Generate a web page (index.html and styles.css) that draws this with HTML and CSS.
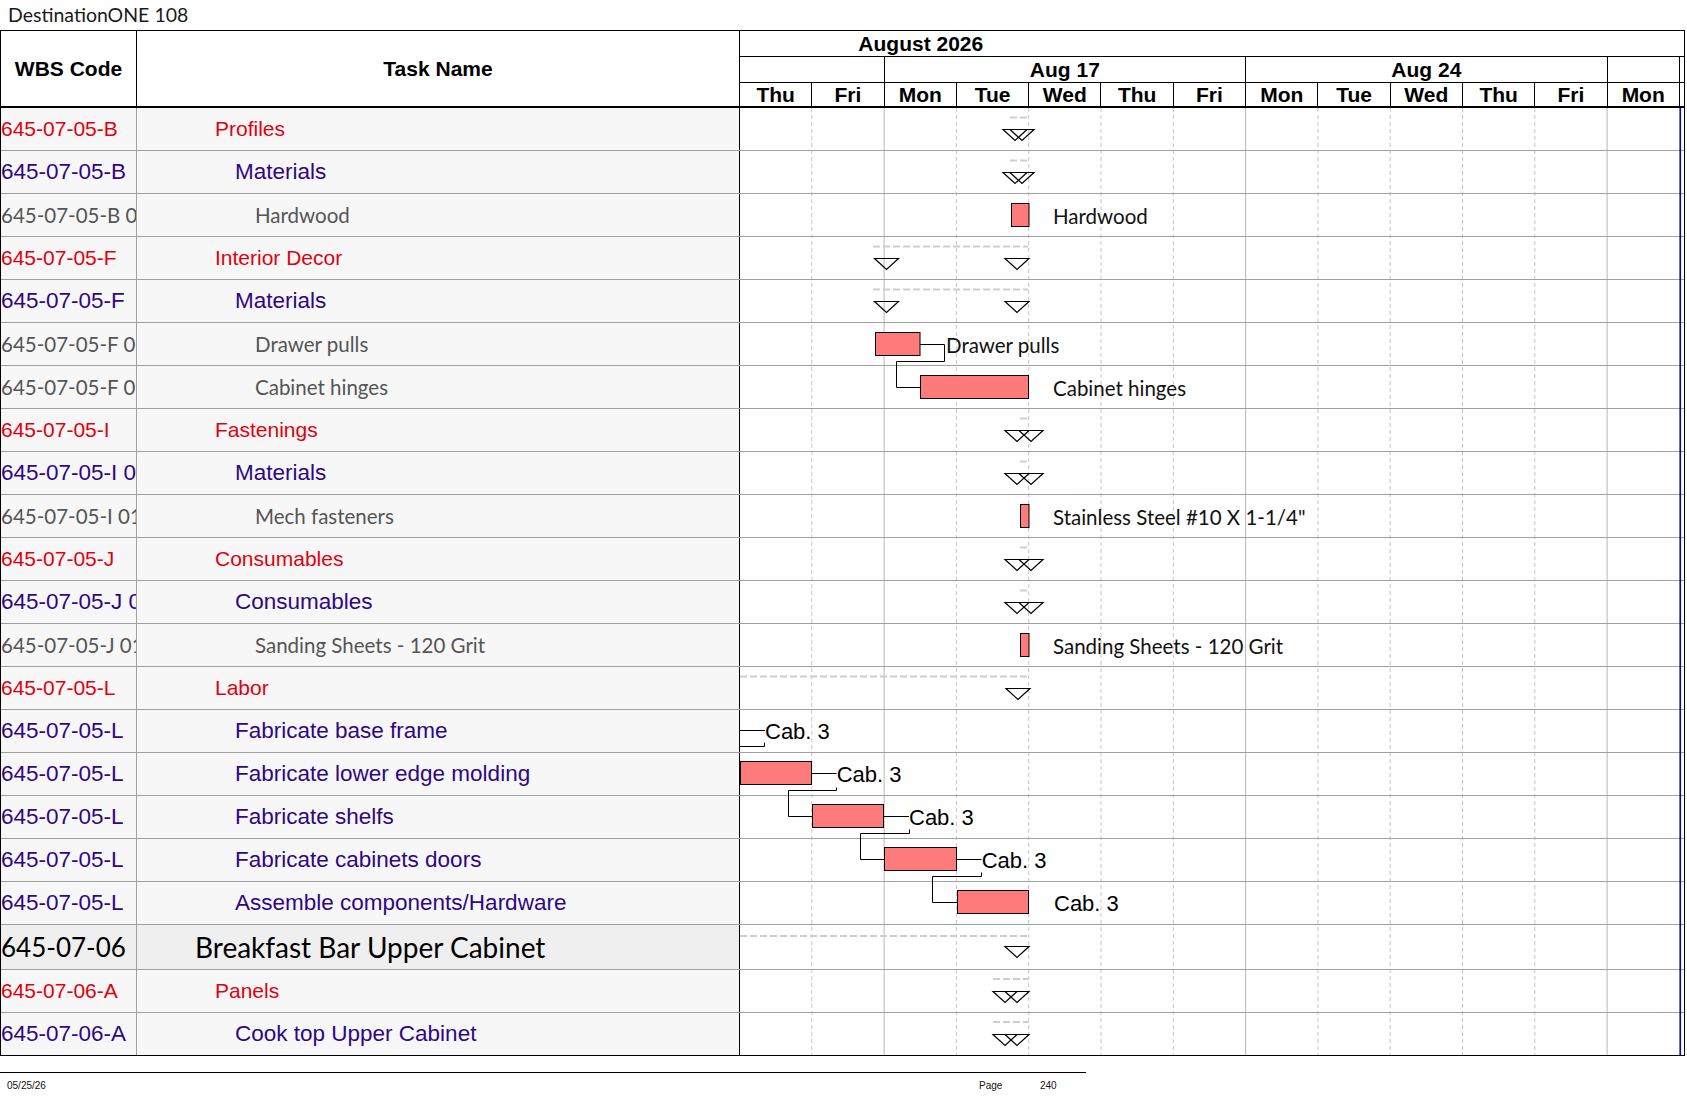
FILE: index.html
```html
<!DOCTYPE html>
<html>
<head>
<meta charset="utf-8">
<title>DestinationONE 108</title>
<link rel="stylesheet" href="styles.css">
</head>
<body>
<div class="page">
  <div class="title">DestinationONE 108</div>
  <div class="sheet">
    <div class="left">
      <div class="lhead">
        <div class="hc wbs">WBS Code</div>
        <div class="hc task">Task Name</div>
      </div>
      <div class="row l2"><div class="code">645-07-05-B</div><div class="name">Profiles</div></div>
      <div class="row l3"><div class="code">645-07-05-B</div><div class="name">Materials</div></div>
      <div class="row l4"><div class="code">645-07-05-B 01</div><div class="name">Hardwood</div></div>
      <div class="row l2"><div class="code">645-07-05-F</div><div class="name">Interior Decor</div></div>
      <div class="row l3"><div class="code">645-07-05-F</div><div class="name">Materials</div></div>
      <div class="row l4"><div class="code">645-07-05-F 01</div><div class="name">Drawer pulls</div></div>
      <div class="row l4"><div class="code">645-07-05-F 02</div><div class="name">Cabinet hinges</div></div>
      <div class="row l2"><div class="code">645-07-05-I</div><div class="name">Fastenings</div></div>
      <div class="row l3"><div class="code">645-07-05-I 01</div><div class="name">Materials</div></div>
      <div class="row l4"><div class="code">645-07-05-I 01</div><div class="name">Mech fasteners</div></div>
      <div class="row l2"><div class="code">645-07-05-J</div><div class="name">Consumables</div></div>
      <div class="row l3"><div class="code">645-07-05-J 01</div><div class="name">Consumables</div></div>
      <div class="row l4"><div class="code">645-07-05-J 01</div><div class="name">Sanding Sheets - 120 Grit</div></div>
      <div class="row l2"><div class="code">645-07-05-L</div><div class="name">Labor</div></div>
      <div class="row l3"><div class="code">645-07-05-L</div><div class="name">Fabricate base frame</div></div>
      <div class="row l3"><div class="code">645-07-05-L</div><div class="name">Fabricate lower edge molding</div></div>
      <div class="row l3"><div class="code">645-07-05-L</div><div class="name">Fabricate shelfs</div></div>
      <div class="row l3"><div class="code">645-07-05-L</div><div class="name">Fabricate cabinets doors</div></div>
      <div class="row l3"><div class="code">645-07-05-L</div><div class="name">Assemble components/Hardware</div></div>
      <div class="row big"><div class="code">645-07-06</div><div class="name">Breakfast Bar Upper Cabinet</div></div>
      <div class="row l2"><div class="code">645-07-06-A</div><div class="name">Panels</div></div>
      <div class="row l3 last"><div class="code">645-07-06-A</div><div class="name">Cook top Upper Cabinet</div></div>
    </div>
    <div class="gantt">
      <div class="ghead">
        <div class="month"><span class="mlabel">August 2026</span></div>
        <div class="wk s2"></div>
        <div class="wk s5">Aug 17</div>
        <div class="wk s5">Aug 24</div>
        <div class="wk s1"></div>
        <div class="wk tail"></div>
        <div class="dy">Thu</div>
        <div class="dy">Fri</div>
        <div class="dy">Mon</div>
        <div class="dy">Tue</div>
        <div class="dy">Wed</div>
        <div class="dy">Thu</div>
        <div class="dy">Fri</div>
        <div class="dy">Mon</div>
        <div class="dy">Tue</div>
        <div class="dy">Wed</div>
        <div class="dy">Thu</div>
        <div class="dy">Fri</div>
        <div class="dy">Mon</div>
        <div class="dy tail"></div>
      </div>
      <svg class="gbody" width="944" height="947" viewBox="0 0 944 947" xmlns="http://www.w3.org/2000/svg">
        <g stroke="#c6c6c6" stroke-width="1" stroke-dasharray="4 3">
          <line x1="71.8" y1="0" x2="71.8" y2="947"/>
          <line x1="216.4" y1="0" x2="216.4" y2="947"/>
          <line x1="288.7" y1="0" x2="288.7" y2="947"/>
          <line x1="361" y1="0" x2="361" y2="947"/>
          <line x1="433.3" y1="0" x2="433.3" y2="947"/>
          <line x1="577.9" y1="0" x2="577.9" y2="947"/>
          <line x1="650.2" y1="0" x2="650.2" y2="947"/>
          <line x1="722.5" y1="0" x2="722.5" y2="947"/>
          <line x1="794.8" y1="0" x2="794.8" y2="947"/>
        </g>
        <g stroke="#b8b8b8" stroke-width="1">
          <line x1="144.1" y1="0" x2="144.1" y2="947"/>
          <line x1="505.6" y1="0" x2="505.6" y2="947"/>
          <line x1="867.1" y1="0" x2="867.1" y2="947"/>
        </g>
        <g stroke="#a0a0a0" stroke-width="1">
          <line x1="0" y1="42.5" x2="944" y2="42.5"/>
          <line x1="0" y1="85.5" x2="944" y2="85.5"/>
          <line x1="0" y1="128.5" x2="944" y2="128.5"/>
          <line x1="0" y1="171.5" x2="944" y2="171.5"/>
          <line x1="0" y1="214.5" x2="944" y2="214.5"/>
          <line x1="0" y1="257.5" x2="944" y2="257.5"/>
          <line x1="0" y1="300.5" x2="944" y2="300.5"/>
          <line x1="0" y1="343.5" x2="944" y2="343.5"/>
          <line x1="0" y1="386.5" x2="944" y2="386.5"/>
          <line x1="0" y1="429.5" x2="944" y2="429.5"/>
          <line x1="0" y1="472.5" x2="944" y2="472.5"/>
          <line x1="0" y1="515.5" x2="944" y2="515.5"/>
          <line x1="0" y1="558.5" x2="944" y2="558.5"/>
          <line x1="0" y1="601.5" x2="944" y2="601.5"/>
          <line x1="0" y1="644.5" x2="944" y2="644.5"/>
          <line x1="0" y1="687.5" x2="944" y2="687.5"/>
          <line x1="0" y1="730.5" x2="944" y2="730.5"/>
          <line x1="0" y1="773.5" x2="944" y2="773.5"/>
          <line x1="0" y1="816.5" x2="944" y2="816.5"/>
          <line x1="0" y1="861.5" x2="944" y2="861.5"/>
          <line x1="0" y1="904.5" x2="944" y2="904.5"/>
        </g>
        <rect x="939.4" y="0" width="1.7" height="947" fill="#0b0ba8"/>

        <g stroke="#cdcdcd" stroke-width="2" stroke-dasharray="7 3">
          <line x1="270" y1="9.5" x2="288" y2="9.5"/>
          <line x1="270" y1="52.5" x2="288" y2="52.5"/>
          <line x1="133" y1="138.5" x2="288" y2="138.5"/>
          <line x1="133" y1="181.5" x2="288" y2="181.5"/>
          <line x1="280" y1="310.5" x2="288" y2="310.5"/>
          <line x1="280" y1="353.5" x2="288" y2="353.5"/>
          <line x1="280" y1="439.5" x2="288" y2="439.5"/>
          <line x1="280" y1="482.5" x2="288" y2="482.5"/>
          <line x1="0" y1="568.5" x2="289" y2="568.5"/>
          <line x1="0" y1="828" x2="289" y2="828"/>
          <line x1="253" y1="871" x2="289" y2="871"/>
          <line x1="253" y1="914" x2="289" y2="914"/>
        </g>

        <g stroke="#000" stroke-width="1.2" fill="none" stroke-linejoin="miter">
          <path d="M263 21.5 h24 l-12 11 z"/>
          <path d="M270 21.5 h24 l-12 11 z"/>
          <path d="M263 64.5 h24 l-12 11 z"/>
          <path d="M270 64.5 h24 l-12 11 z"/>
          <path d="M134.5 150.5 h24 l-12 11 z"/>
          <path d="M265 150.5 h24 l-12 11 z"/>
          <path d="M134.5 193.5 h24 l-12 11 z"/>
          <path d="M265 193.5 h24 l-12 11 z"/>
          <path d="M265 322.5 h24 l-12 11 z"/>
          <path d="M279 322.5 h24 l-12 11 z"/>
          <path d="M265 365.5 h24 l-12 11 z"/>
          <path d="M279 365.5 h24 l-12 11 z"/>
          <path d="M265 451.5 h24 l-12 11 z"/>
          <path d="M279 451.5 h24 l-12 11 z"/>
          <path d="M265 494.5 h24 l-12 11 z"/>
          <path d="M279 494.5 h24 l-12 11 z"/>
          <path d="M266 580.5 h24 l-12 11 z"/>
          <path d="M265 838.5 h24 l-12 11 z"/>
          <path d="M253 883.5 h24 l-12 11 z"/>
          <path d="M265 883.5 h24 l-12 11 z"/>
          <path d="M253 926.5 h24 l-12 11 z"/>
          <path d="M265 926.5 h24 l-12 11 z"/>
        </g>

        <g fill="#ff7b7b" stroke="#000" stroke-width="1">
          <rect x="271.5" y="95.5" width="17.5" height="23"/>
          <rect x="135.5" y="224.5" width="44.5" height="23"/>
          <rect x="180.5" y="267.5" width="108" height="23"/>
          <rect x="280.5" y="396.5" width="8.5" height="23"/>
          <rect x="280.5" y="525.5" width="8.5" height="23"/>
          <rect x="0.5" y="653.5" width="71" height="23"/>
          <rect x="72.5" y="696.5" width="71" height="23"/>
          <rect x="144.5" y="739.5" width="72" height="23"/>
          <rect x="217.5" y="782.5" width="71" height="23"/>
        </g>

        <g stroke="#000" stroke-width="1" fill="none">
          <polyline points="180,236.5 204.5,236.5 204.5,253.5 156.5,253.5 156.5,279.5 180.5,279.5"/>
          <line x1="0" y1="622.5" x2="25" y2="622.5"/>
          <polyline points="0,638.5 24.5,638.5 24.5,634.5"/>
          <line x1="71.5" y1="665.5" x2="96.5" y2="665.5"/>
          <polyline points="96.5,679.5 96.5,682.5 48.5,682.5 48.5,708.5 72.5,708.5"/>
          <line x1="143.5" y1="708.5" x2="169" y2="708.5"/>
          <polyline points="169.5,721.5 169.5,725.5 120.5,725.5 120.5,751.5 144.5,751.5"/>
          <line x1="216.5" y1="751.5" x2="241.5" y2="751.5"/>
          <polyline points="241.5,764.5 241.5,768.5 192.5,768.5 192.5,794.5 217.5,794.5"/>
        </g>

        <g class="lbl-c">
          <text x="313" y="115.5">Hardwood</text>
          <text x="206" y="244.5">Drawer pulls</text>
          <text x="313" y="287.5">Cabinet hinges</text>
          <text x="313" y="416.5">Stainless Steel #10 X 1-1/4&quot;</text>
          <text x="313" y="545.5">Sanding Sheets - 120 Grit</text>
        </g>
        <g class="lbl-a">
          <text x="25" y="630.5">Cab. 3</text>
          <text x="96.7" y="673.5">Cab. 3</text>
          <text x="169" y="716.5">Cab. 3</text>
          <text x="241.7" y="759.5">Cab. 3</text>
          <text x="314" y="802.5">Cab. 3</text>
        </g>
      </svg>
    </div>
  </div>
  <div class="footer">
    <span class="fdate">05/25/26</span>
    <span class="fpage">Page</span>
    <span class="fnum">240</span>
  </div>
</div>
</body>
</html>
```

FILE: styles.css
```css
* {
  box-sizing: border-box;
}

body {
  margin: 0;
  background: #ffffff;
  font-family: "Liberation Sans", Arial, sans-serif;
  color: #000;
}

.page {
  width: 1687px;
  height: 1097px;
  overflow: hidden;
}

.title {
  height: 30px;
  padding-left: 8px;
  font-family: Lato, "Open Sans", sans-serif;
  font-size: 19.5px;
  line-height: 29px;
  color: #1a1a1a;
}

.sheet {
  display: flex;
  width: 1685px;
  border-top: 1px solid #000;
  border-left: 1px solid #000;
  border-bottom: 1px solid #000;
}

.left {
  width: 739px;
  flex: none;
}

.lhead {
  display: flex;
  height: 77px;
  border-bottom: 2px solid #000;
  background: #fff;
}

.hc {
  display: flex;
  align-items: center;
  justify-content: center;
  font-family: "Liberation Sans", Arial, sans-serif;
  font-weight: bold;
  font-size: 21px;
}

.hc.wbs {
  width: 136px;
  border-right: 1px solid #000;
}

.hc.task {
  width: 603px;
  border-right: 1px solid #000;
}

.row {
  display: flex;
  height: 43px;
  border-bottom: 1px solid #a0a0a0;
  background: #f7f7f7;
}

.row.big {
  height: 45px;
  background: #efefef;
}

.row.last {
  height: 42px;
  border-bottom: none;
}

.code {
  width: 136px;
  flex: none;
  border-right: 1px solid #a0a0a0;
  overflow: hidden;
  white-space: nowrap;
  display: flex;
  align-items: center;
}

.name {
  width: 603px;
  flex: none;
  border-right: 1px solid #000;
  overflow: hidden;
  white-space: nowrap;
  display: flex;
  align-items: center;
}

.l2 {
  color: #e3000e;
  font-family: "Liberation Sans", Arial, sans-serif;
  font-size: 21px;
}

.l2 .name {
  padding-left: 78px;
}

.l3 {
  color: #2f0785;
  font-family: "Liberation Sans", Arial, sans-serif;
  font-size: 22.5px;
}

.l3 .name {
  padding-left: 98px;
}

.l4 {
  color: #555555;
  font-family: Lato, "Open Sans", sans-serif;
  font-size: 20.5px;
}

.l4 .name {
  padding-left: 118px;
}

.big {
  color: #000;
  font-family: Lato, "Open Sans", sans-serif;
  font-size: 28px;
}

.big .code {
  font-size: 26px;
}

.big .name {
  padding-left: 58px;
}

.gantt {
  width: 945px;
  flex: none;
  border-right: 1px solid #000;
  background: #fff;
}

.ghead {
  display: grid;
  grid-template-columns: repeat(13, 72.3px) 1fr;
  grid-template-rows: 26px 26px 25px;
  font-family: "Liberation Sans", Arial, sans-serif;
  font-weight: bold;
  font-size: 21px;
}

.month {
  grid-column: 1 / -1;
  border-bottom: 1px solid #000;
  display: flex;
}

.mlabel {
  width: 361.5px;
  text-align: center;
  line-height: 25px;
}

.wk {
  border-bottom: 1px solid #000;
  border-right: 1px solid #000;
  text-align: center;
  line-height: 25px;
}

.wk.s2 {
  grid-column: span 2;
}

.wk.s5 {
  grid-column: span 5;
}

.wk.s1 {
  grid-column: span 1;
}

.tail {
  border-right: none;
}

.dy {
  border-bottom: 2px solid #000;
  border-right: 1px solid #000;
  text-align: center;
  line-height: 23px;
}

.dy.tail {
  border-right: none;
}

.gbody {
  display: block;
}

.lbl-c text {
  font-family: Lato, "Open Sans", sans-serif;
  font-size: 20.5px;
  fill: #111;
}

.lbl-a text {
  font-family: "Liberation Sans", Arial, sans-serif;
  font-size: 22px;
  fill: #000;
}

.footer {
  display: flex;
  width: 1086px;
  margin-top: 16px;
  border-top: 1px solid #000;
  padding-top: 7px;
  font-family: "Liberation Sans", Arial, sans-serif;
  font-size: 10px;
  line-height: 12px;
  color: #111;
}

.fdate {
  width: 979px;
  padding-left: 7px;
}

.fpage {
  width: 61px;
}
```
